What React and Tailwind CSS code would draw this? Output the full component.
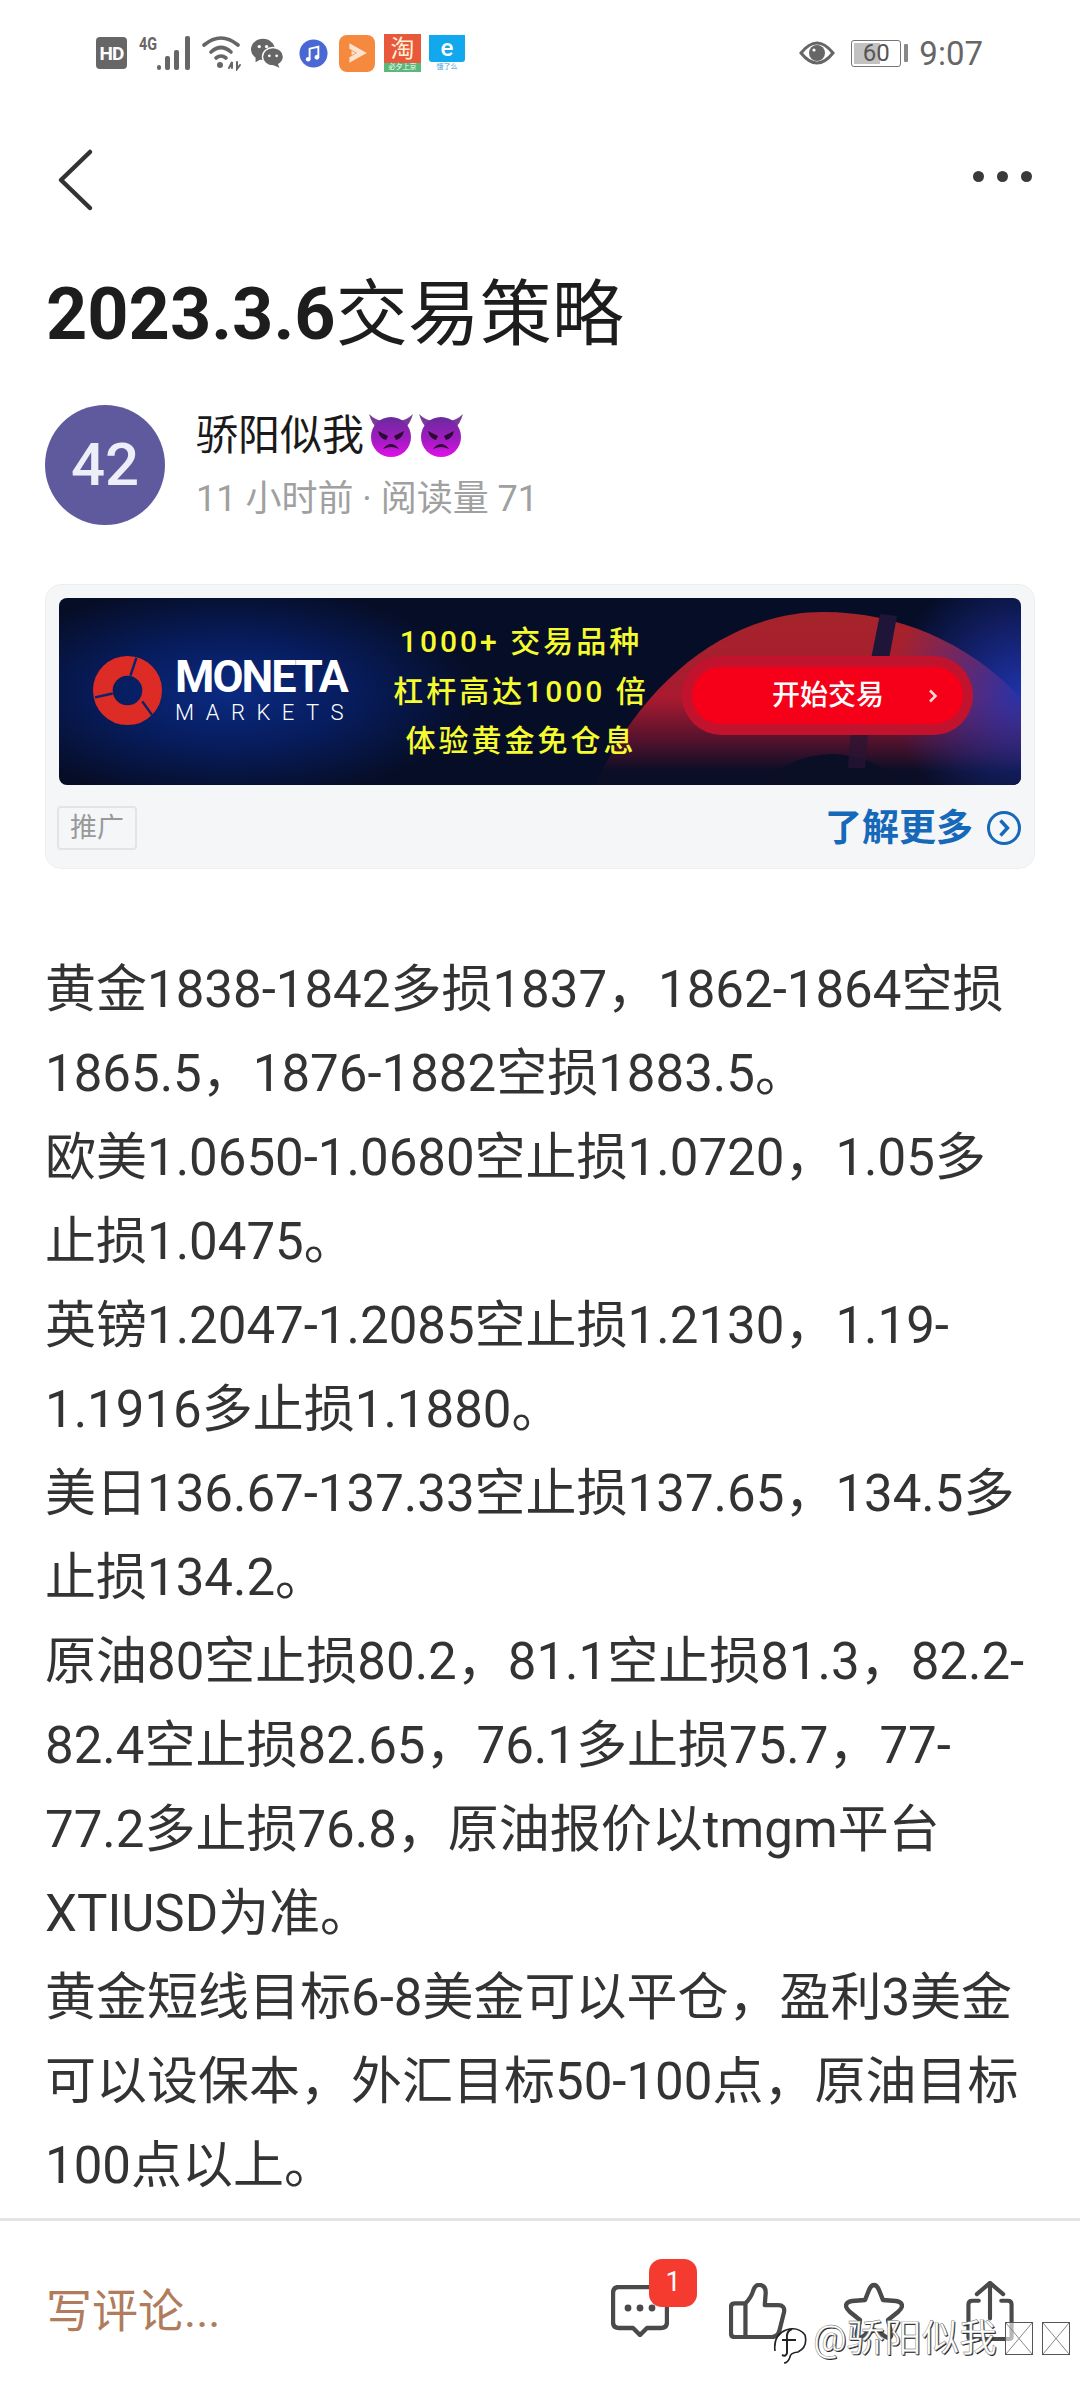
// 2023.3.6 article page, phone screenshot
const bodyLines = [
  "黄金1838-1842多损1837，1862-1864空损",
  "1865.5，1876-1882空损1883.5。",
  "欧美1.0650-1.0680空止损1.0720，1.05多",
  "止损1.0475。",
  "英镑1.2047-1.2085空止损1.2130，1.19-",
  "1.1916多止损1.1880。",
  "美日136.67-137.33空止损137.65，134.5多",
  "止损134.2。",
  "原油80空止损80.2，81.1空止损81.3，82.2-",
  "82.4空止损82.65，76.1多止损75.7，77-",
  "77.2多止损76.8，原油报价以tmgm平台",
  "XTIUSD为准。",
  "黄金短线目标6-8美金可以平仓，盈利3美金",
  "可以设保本，外汇目标50-100点，原油目标",
  "100点以上。",
];

const sans = "font-['Roboto','Noto_Sans_CJK_SC',sans-serif]";

export default function App() {
  return (
    <div className={`relative w-[1080px] h-[2400px] overflow-hidden bg-white text-[#222] ${sans}`}>
      <StatusBar />

      {/* top nav */}
      <div className="flex items-center justify-between h-[100px] mt-[24px] pl-[56px] pr-[48px]">
        <svg width="40" height="64" viewBox="0 0 40 64" fill="none" stroke="#333" strokeWidth="4.5" strokeLinecap="round" strokeLinejoin="round">
          <path d="M34 4 L5 32 L34 60" />
        </svg>
        <div className="flex gap-[13px] -mt-[8px]">
          <span className="w-[11px] h-[11px] rounded-full bg-[#3a3a3a]" />
          <span className="w-[11px] h-[11px] rounded-full bg-[#3a3a3a]" />
          <span className="w-[11px] h-[11px] rounded-full bg-[#3a3a3a]" />
        </div>
      </div>

      <h1 className="mt-[40px] pl-[46px] text-[72px] leading-[90px] text-[#1d1d1d]">
        <span className="font-bold">2023.3.6</span>
        <span className="font-normal">交易策略</span>
      </h1>

      {/* author */}
      <div className="flex items-start gap-[31px] mt-[45px] pl-[45px]">
        <div className="flex items-center justify-center w-[120px] h-[120px] rounded-full bg-[#5f5a9e] text-[#eeeef8] text-[60px] font-medium">42</div>
        <div className="flex flex-col mt-[6px]">
          <div className="flex items-center h-[48px] text-[42px] text-[#1a1a1a]">
            骄阳似我
            <DevilEmoji />
            <DevilEmoji />
          </div>
          <div className="mt-[19px] text-[36px] leading-[42px] text-[#a0a0a0]">11 小时前 · 阅读量 71</div>
        </div>
      </div>

      <AdCard />

      {/* article body */}
      <div className="mt-[79px] pl-[45px] text-[51px] leading-[84px] text-[#333] whitespace-nowrap">
        {bodyLines.map((line) => (
          <div key={line}>{line}</div>
        ))}
      </div>

      <BottomBar />
    </div>
  );
}

function StatusBar() {
  return (
    <div className="flex items-center justify-between h-[106px] pl-[96px] pr-[97px]">
      <div className="flex items-center">
        <div className="flex items-center justify-center w-[31px] h-[32px] rounded-[4px] bg-[#666] text-white text-[19px] leading-none font-bold tracking-[-1px]">HD</div>
        <svg className="ml-[12px]" width="53" height="36" viewBox="0 0 53 36" fill="#666">
          <text x="0" y="15" fontSize="18" fontWeight="700" fontFamily="Roboto, sans-serif" textLength="18" lengthAdjust="spacingAndGlyphs">4G</text>
          <rect x="18" y="30" width="4" height="5" rx="2" />
          <rect x="26" y="21" width="5" height="14" rx="2" />
          <rect x="35" y="15" width="5" height="20" rx="2" />
          <rect x="46" y="1" width="5" height="34" rx="2" />
        </svg>
        <svg className="ml-[10px]" width="40" height="36" viewBox="0 0 40 36" fill="none" stroke="#666" strokeWidth="3.6" strokeLinecap="round">
          <path d="M2 10 Q19 -4 36 10" />
          <path d="M9 17 Q19 8 29 17" />
          <path d="M14 23 Q19 19 24 23" />
          <circle cx="18" cy="30" r="3" fill="#666" stroke="none" />
          <path d="M27 33 L30 27 L30 33 M35 27 L35 34 L38 30" strokeWidth="2" />
        </svg>
        <svg className="ml-[9px]" width="33" height="30" viewBox="0 0 36 32" fill="#666">
          <ellipse cx="13" cy="12" rx="13" ry="11.5" />
          <path d="M5 19 L5 26 L12 22Z" />
          <ellipse cx="24" cy="20" rx="11.5" ry="10" fill="#666" stroke="#fff" strokeWidth="1.5" />
          <path d="M29 27 L31 32 L24 29Z" />
          <circle cx="9" cy="9" r="1.8" fill="#fff" />
          <circle cx="17" cy="9" r="1.8" fill="#fff" />
          <circle cx="20" cy="19" r="1.5" fill="#fff" />
          <circle cx="28" cy="19" r="1.5" fill="#fff" />
        </svg>
        {/* music app */}
        <svg className="ml-[15px]" width="29" height="29" viewBox="0 0 30 30">
          <circle cx="15" cy="15" r="14.5" fill="#4a68d4" />
          <path d="M11 21 V10 L20 8 V19" fill="none" stroke="#fff" strokeWidth="2" />
          <circle cx="9.5" cy="21" r="2.4" fill="#fff" />
          <circle cx="18.5" cy="19" r="2.4" fill="#fff" />
        </svg>
        {/* video app */}
        <div className="flex items-center justify-center ml-[11px] w-[36px] h-[37px] rounded-[8px] bg-[#f58a3e]">
          <svg width="24" height="24" viewBox="0 0 22 22">
            <path d="M4 2 L20 11 L4 20 L4 15 L11 11 L4 7Z" fill="#fde3cf" />
            <path d="M6 9 L10 11 L6 13Z" fill="#fde3cf" />
          </svg>
        </div>
        {/* taobao */}
        <div className="flex flex-col ml-[9px] w-[37px] h-[38px]">
          <div className="flex flex-1 items-center justify-center bg-[#e8583a] text-[24px] leading-none text-[#fff1d8]">淘</div>
          <div className="flex items-center justify-center h-[9px] bg-[#5cb87a] text-[7px] leading-none text-white">必夕上京</div>
        </div>
        {/* ele.me */}
        <div className="flex flex-col ml-[8px] w-[36px] h-[37px]">
          <div className="flex items-center justify-center h-[27px] rounded-b-[3px] bg-[#12a8ee] text-white text-[24px] leading-none font-medium">e</div>
          <div className="text-[7px] leading-[10px] text-center text-[#3aa0d8]">饿了么</div>
        </div>
      </div>

      <div className="flex items-center">
        <svg width="36" height="28" viewBox="0 0 36 28" fill="none">
          <path d="M2 14 Q18 -6 34 14 Q18 34 2 14Z" stroke="#666" strokeWidth="3" />
          <circle cx="18" cy="14" r="8" fill="#666" />
          <circle cx="15" cy="11" r="1.6" fill="#fff" />
        </svg>
        <div className="relative ml-[16px] flex items-center justify-center w-[50px] h-[27px] rounded-[3px] border-[1.5px] border-[#777] text-[#555] text-[24px] leading-none">
          <span className="absolute left-[2px] top-[2px] bottom-[2px] w-[26px] bg-[#c2c2c2]" />
          <span className="relative">60</span>
        </div>
        <span className="ml-[3px] w-[4px] h-[18px] rounded-[1px] bg-[#888]" />
        <span className="ml-[11px] text-[33px] leading-none text-[#666]">9:07</span>
      </div>
    </div>
  );
}

function DevilEmoji() {
  return (
    <svg className="ml-[4px]" width="46" height="46" viewBox="0 0 46 46">
      <defs>
        <linearGradient id="devilFace" x1="0" y1="0" x2="0" y2="1">
          <stop offset="0" stopColor="#6a2a9a" />
          <stop offset="0.55" stopColor="#a01cc0" />
          <stop offset="1" stopColor="#e010e8" />
        </linearGradient>
      </defs>
      <path d="M1 2 Q4 12 9 16 L15 9 Q7 8 1 2Z" fill="#7a3a9a" />
      <path d="M45 2 Q42 12 37 16 L31 9 Q39 8 45 2Z" fill="#7a3a9a" />
      <circle cx="23" cy="25" r="20" fill="url(#devilFace)" />
      <path d="M10 19 L20 24 L18 28 Q12 27 10 19Z M36 19 L26 24 L28 28 Q34 27 36 19Z" fill="#2a0a30" />
      <path d="M15 37 Q23 27 31 37 Q23 33 15 37Z" fill="#2a0a30" />
    </svg>
  );
}

function AdCard() {
  return (
    <div className="mx-[45px] mt-[59px] h-[285px] rounded-[16px] border border-[#eeeeee] bg-[#f4f6f8] px-[13px] pt-[13px]">
      <AdBanner />
      <div className="flex items-center justify-between mt-[21px]">
        <div className="flex items-center justify-center -ml-[2px] w-[80px] h-[44px] rounded-[4px] border-2 border-[#e4e4e4] text-[27px] text-[#999]">推广</div>
        <div className="flex items-center text-[#1668b8] text-[37px] leading-none font-bold">
          了解更多
          <svg className="ml-[13px] -mr-[1px]" width="36" height="36" viewBox="0 0 36 36" fill="none" stroke="#1668b8" strokeWidth="3">
            <circle cx="18" cy="18" r="15.5" />
            <path d="M14.5 10.5 L21.5 18 L14.5 25.5" strokeWidth="3.4" />
          </svg>
        </div>
      </div>
    </div>
  );
}

function AdBanner() {
  return (
    <div className="relative h-[187px] overflow-hidden rounded-[8px] bg-[#060d26]">
      {/* glow behind logo */}
      <div className="absolute inset-0 bg-[radial-gradient(ellipse_250px_108px_at_170px_95px,#0a2a82_0%,#071c5c_50%,transparent_100%)]" />

      {/* red dome with blue right edge, drawn as the ad's artwork */}
      <svg className="absolute inset-0" width="962" height="187" viewBox="0 0 962 187">
        <defs>
          <linearGradient id="domeFade" x1="0" y1="0" x2="0" y2="1">
            <stop offset="0" stopColor="#a5242b" />
            <stop offset="0.5" stopColor="#a81a30" />
            <stop offset="0.75" stopColor="#50122c" />
            <stop offset="0.92" stopColor="#0a0e26" />
          </linearGradient>
          <radialGradient id="sideGlow" gradientUnits="userSpaceOnUse" cx="962" cy="95" r="130">
            <stop offset="0" stopColor="#2034b0" stopOpacity="0.95" />
            <stop offset="1" stopColor="#2034b0" stopOpacity="0" />
          </radialGradient>
        </defs>
        <path d="M536 187 C590 70 680 14 764 14 C840 14 910 45 962 100 L962 187Z" fill="url(#domeFade)" />
        <rect x="820" y="0" width="142" height="187" fill="url(#sideGlow)" />
        <path d="M698 187 Q773 125 848 187Z" fill="#0a0f26" />
        <path d="M821 16 L838 18 L829 66 L811 66Z" fill="#1f1538" />
        <path d="M792 128 L810 128 L806 170 L789 170Z" fill="#2a1434" opacity="0.7" />
      </svg>

      {/* logo */}
      <div className="absolute left-[34px] top-[58px] flex items-center gap-[13px]">
        <svg width="69" height="69" viewBox="0 0 70 70">
          <circle cx="35" cy="35" r="25" fill="none" stroke="#dc2c25" strokeWidth="20" />
          <path d="M44 2 L38 20 M2 42 L20 38 M50 46 L60 60" stroke="#0a2468" strokeWidth="2.5" />
        </svg>
        <div className="flex flex-col text-white">
          <span className="text-[45px] leading-[36px] font-bold tracking-[-2px]">MONETA</span>
          <span className="mt-[8px] text-[22px] leading-[20px] font-light tracking-[11.5px]">MARKETS</span>
        </div>
      </div>

      {/* slogan */}
      <div className="absolute left-[322px] top-[19px] w-[280px] flex flex-col items-center text-[30px] leading-[49.5px] font-medium text-[#f6fb2e] tracking-[3px] whitespace-nowrap">
        <span>1000+ 交易品种</span>
        <span>杠杆高达1000 倍</span>
        <span>体验黄金免仓息</span>
      </div>

      {/* button */}
      <div className="absolute left-[623px] top-[58px] flex items-center w-[291px] h-[79px] rounded-full bg-[#c2132e]">
        <div className="flex items-center mx-[10px] w-[271px] h-[57px] rounded-full bg-[#f50018] text-white text-[28px] font-medium">
          <span className="ml-[80px]">开始交易</span>
          <svg className="ml-[44px]" width="10" height="14" viewBox="0 0 10 14" fill="none" stroke="#f6d6d6" strokeWidth="2.6">
            <path d="M2 1.5 L7.5 7 L2 12.5" />
          </svg>
        </div>
      </div>
    </div>
  );
}

function TofuBox() {
  return (
    <svg width="28" height="33" viewBox="0 0 28 33" fill="none" stroke="#555" strokeWidth="1">
      <rect x="0.5" y="0.5" width="27" height="32" fill="#fff" fillOpacity="0.6" />
      <path d="M1 1 L27 32 M27 1 L1 32" stroke="#888" />
    </svg>
  );
}

function BottomBar() {
  return (
    <div className="absolute left-0 right-0 bottom-0 h-[182px] border-t-[3px] border-[#e5e5e5] bg-white">
      <div className="flex items-center h-full pl-[46px] pr-[66px]">
        <span className="text-[46px] leading-none text-[#b07c5c]">写评论...</span>

        <div className="flex items-center ml-auto">
          {/* comment */}
          <div className="relative">
            <svg className="block" width="58" height="52" viewBox="0 0 58 52" fill="none" stroke="#4a4a4a" strokeWidth="4.4" strokeLinejoin="round">
              <path d="M8 2 H50 Q56 2 56 8 V37 Q56 43 50 43 H36 L29 50 L22 43 H8 Q2 43 2 37 V8 Q2 2 8 2Z" />
              <circle cx="17" cy="23" r="3.4" fill="#4a4a4a" stroke="none" />
              <circle cx="29" cy="23" r="3.4" fill="#4a4a4a" stroke="none" />
              <circle cx="41" cy="23" r="3.4" fill="#4a4a4a" stroke="none" />
            </svg>
            <span className="absolute left-[38px] -top-[26px] flex items-center justify-center w-[48px] h-[48px] rounded-[13px] bg-[#f53a30] text-white text-[27px] leading-none">1</span>
          </div>

          {/* like */}
          <svg className="ml-[60px]" width="58" height="56" viewBox="0 0 60 58" fill="none" stroke="#4a4a4a" strokeWidth="4.4" strokeLinecap="round" strokeLinejoin="round">
            <path d="M17 21 H6 Q2 21 2 25 V52 Q2 56 6 56 H44 Q50 56 52 50 L57 30 Q58 23 51 23 H37 L38 10 Q38 2 31 2 Q27 2 25 8 Q23 15 17 21 V56" />
          </svg>

          {/* star */}
          <svg className="ml-[57px]" width="60" height="58" viewBox="0 0 60 58" fill="none" stroke="#4a4a4a" strokeWidth="4.4" strokeLinejoin="round">
            <path d="M30 3 Q33 3 35 8 L39 18 L52 19 Q58 20 58 24 Q58 26 54 30 L44 38 L47 50 Q48 55 45 56 Q43 56 39 53 L30 48 L21 53 Q17 56 15 56 Q12 55 13 50 L16 38 L6 30 Q2 26 2 24 Q2 20 8 19 L21 18 L25 8 Q27 3 30 3Z" />
          </svg>

          {/* share */}
          <svg className="ml-[62px]" width="48" height="60" viewBox="0 0 50 64" fill="none" stroke="#4a4a4a" strokeWidth="4.4" strokeLinecap="round" strokeLinejoin="round">
            <path d="M25 2 V40 M11 14 L25 2 L39 14" />
            <path d="M13 21 H6 Q2 21 2 25 V60 Q2 62 6 62 H44 Q48 62 48 60 V25 Q48 21 44 21 H37" />
          </svg>
        </div>
      </div>

      {/* watermark stamped over the icons */}
      <div className="absolute left-[772px] top-[101px] flex items-start">
        <svg className="mt-[5px]" width="36" height="38" viewBox="0 0 36 38" fill="none" stroke="#222" strokeWidth="1.6">
          <path d="M3 24 Q1 8 14 3 Q26 -1 33 8 Q36 20 26 25 Q18 26 18 30 Q16 36 12 36" />
          <path d="M20 2 Q14 4 15 12 L15 26 Q14 30 10 28 M10 13 H24" strokeWidth="2" />
        </svg>
        <span className="ml-[5px] text-[37.5px] leading-[33px] text-white whitespace-nowrap [-webkit-text-stroke:0.4px_#666] [text-shadow:1px_1px_0_#222]">@骄阳似我</span>
        <span className="flex gap-[9px] ml-[8px]">
          <TofuBox />
          <TofuBox />
        </span>
      </div>
    </div>
  );
}
